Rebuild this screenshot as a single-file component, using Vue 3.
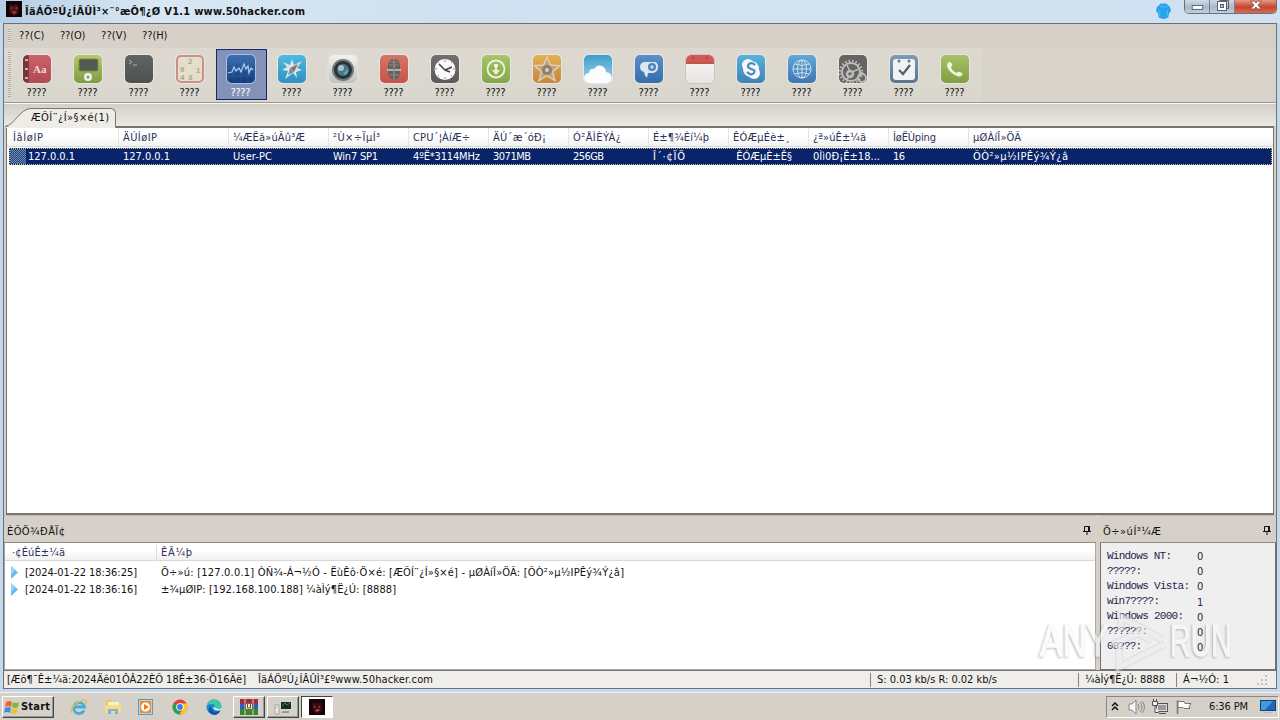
<template>
  <div class="desktop">
    <!-- title bar -->
    <header class="titlebar">
      <svg class="app-icon" viewBox="0 0 16 16">
        <rect width="16" height="16" fill="#150306" />
        <path d="M4 3l3 2 3-2 3 4-2 6-3 2-4-3-1-5z" fill="#4b1219" />
        <path d="M5 6l2 1-2 1zM11 6l-2 1 2 1zM6 11l2-1 3 1-3 2z" fill="#a03b3e" />
      </svg>
      <span v-fit="280" class="title">ÎäÁÖºÚ¿ÍÂÛÌ³×¨°æÔ¶¿Ø V1.1 www.50hacker.com</span>
      <svg class="shirt" viewBox="0 0 18 18">
        <path d="M6 1h6l4 4 1 4-2 2-1 5q-5 3-10 0l-1-5-2-2 1-4z" fill="#25a3ee" />
        <path d="M5 4q4 2 8 0M5 8v7M13 8v7" fill="none" stroke="#55bff8" />
      </svg>
      <div class="win-buttons">
        <span class="wb min"><svg viewBox="0 0 25 14"><rect x="7.500" y="5.500" width="11" height="4" fill="#fff" stroke="#596170" /></svg></span>
        <span class="wb max"><svg viewBox="0 0 24 14"><path d="M9.500 .5h9v8h-2" fill="none" stroke="#596170" /><rect x="7.500" y="1.500" width="9" height="9" fill="#fff" stroke="#596170" /><rect x="10.500" y="4.500" width="3" height="3" fill="#b8c4d2" stroke="#596170" /></svg></span>
        <span class="wb close"><svg viewBox="0 0 42 14"><path d="M16 1h4l1.500 2L23 1h4l-3.500 4L27 9h-4l-1.500-2L20 9h-4l3.500-4z" fill="#fff" stroke="#754a4b" stroke-width=".8" /></svg></span>
      </div>
    </header>

    <main class="window">
      <nav class="menu">
        <i class="grip"></i>
        <span v-for="m in menus" :key="m" v-fit="25.500" class="menu-item">{{ m }}</span>
      </nav>

      <section class="toolbar">
        <div class="tools">
          <i class="grip"></i>
          <div v-for="t in tools" :key="t.name" class="tool" :class="{ active: t.name === 'monitor' }">
            <div class="ticon" :class="t.name">
              <svg viewBox="0 0 28 28" v-html="t.art"></svg>
            </div>
            <span v-fit="20" class="tlabel">????</span>
          </div>
        </div>
      </section>

      <section class="tabs">
        <svg class="tab-shape" viewBox="0 0 112 21">
          <path d="M0 20.500C10 19 14 2 26 1.500h80q4 0 4.500 4v16H0z" fill="#eeece6" />
          <path d="M0 19.500C10 18 14 2 26 1.500h80q4 0 4.500 4v15" fill="none" stroke="#77756e" />
        </svg>
        <span v-fit="78" class="tab-text">ÆÕÍ¨¿Í»§×é(1)</span>
      </section>

      <!-- host list -->
      <section class="hosts">
        <div class="row head">
          <div v-for="c in columns" :key="c.head" class="cell" :style="{ width: c.w + 'px' }">
            <span v-fit="c.hw">{{ c.head }}</span>
          </div>
        </div>
        <div class="row selected">
          <i class="thumb"></i>
          <div v-for="c in columns" :key="c.head" class="cell" :style="{ width: c.w + 'px' }">
            <span v-fit="c.vw" :class="{ shift: c.shift }">{{ c.value }}</span>
          </div>
        </div>
      </section>

      <!-- bottom panels -->
      <section class="bottom">
        <div class="log">
          <div class="caption">
            <span v-fit="58">ÈÕÖ¾ÐÅÏ¢</span>
            <svg class="pin" viewBox="0 0 8 9"><path d="M1.500 5V.5h5V5M0 5.500h8M4 6v3M5.500 1v4" fill="none" stroke="#111" /></svg>
          </div>
          <div class="log-list">
            <div class="log-head">
              <div class="lh-time"><span v-fit="53">·¢ÉúÊ±¼ä</span></div>
              <span v-fit="31">ÊÂ¼þ</span>
            </div>
            <div v-for="l in logs" :key="l.time" class="log-row">
              <svg class="arrow" viewBox="0 0 7 13"><path d="M0 0l7 6.500L0 13z" fill="#6bb8ea" /><path d="M0 0l4 4-4 5z" fill="#9ad5f5" /></svg>
              <span v-fit="112" class="time">{{ l.time }}</span>
              <span v-fit="l.w">{{ l.text }}</span>
            </div>
          </div>
        </div>
        <div class="stats">
          <div class="caption">
            <span v-fit="58">Ö÷»úÍ³¼Æ</span>
            <svg class="pin" viewBox="0 0 8 9"><path d="M1.500 5V.5h5V5M0 5.500h8M4 6v3M5.500 1v4" fill="none" stroke="#111" /></svg>
          </div>
          <div class="stat-box">
            <div class="names"><div v-for="s in stats" :key="s.name"><span v-fit="s.name.length * 6 - 1">{{ s.name }}</span></div></div>
            <div class="nums"><div v-for="s in stats" :key="s.name">{{ s.n }}</div></div>
          </div>
        </div>
      </section>

      <footer class="status">
        <span v-fit="239" class="s-start">[Æô¶¯Ê±¼ä:2024Äê01ÔÂ22ÈÕ 18Ê±36·Ö16Ãë]</span>
        <span v-fit="175" class="s-site">ÎäÁÖºÚ¿ÍÂÛÌ³£ºwww.50hacker.com</span>
        <div class="s-cell speed"><span v-fit="120">S: 0.03 kb/s R: 0.02 kb/s</span></div>
        <div class="s-cell port"><span v-fit="80">¼àÌý¶Ë¿Ú: 8888</span></div>
        <div class="s-cell conn"><span v-fit="46">Á¬½Ó: 1</span></div>
        <svg class="resize" viewBox="0 0 12 12"><path d="M9 1h2v2H9zM9 5h2v2H9zM5 5h2v2H5zM9 9h2v2H9zM5 9h2v2H5zM1 9h2v2H1z" fill="#c3c1bb" /></svg>
      </footer>
    </main>

    <!-- watermark over the stats panel -->
    <svg class="watermark" viewBox="0 0 200 66">
      <text x="3" y="47" textLength="69" lengthAdjust="spacingAndGlyphs">ANY</text>
      <text x="133" y="47" textLength="62" lengthAdjust="spacingAndGlyphs">RUN</text>
      <path d="M84 21V8L126 31M75 36l26-12 14 8M82 33v25l46-23" fill="none" stroke="#bdbdbd" stroke-opacity=".3" stroke-width="8" />
      <path d="M84 21V8L126 31M75 36l26-12 14 8M82 33v25l46-23" fill="none" stroke="#fafafa" stroke-opacity=".5" stroke-width="5.500" />
    </svg>

    <!-- taskbar -->
    <div class="taskbar">
      <div class="start">
        <svg viewBox="0 0 16 16">
          <path d="M2 3q3-2 6 0L7 8q-3-2-6 0z" fill="#ee6333" /><path d="M9 3q3 2 6 0l-1 5q-3 2-6 0z" fill="#79b842" />
          <path d="M1 9q3-2 6 0l-1 5q-3-2-6 0z" fill="#3d91dc" /><path d="M8 9q3 2 6 0l-1 5q-3 2-6 0z" fill="#f4c133" />
        </svg>
        <span v-fit="29">Start</span>
      </div>
      <div class="quick">
        <svg viewBox="0 0 18 18"><path d="M14 12.500A5.500 5.500 0 1 1 14.500 9H5" fill="none" stroke="#43ace3" stroke-width="2.800" /><path d="M2 15Q-1 11 7 5q7-5 9-2 1 1-.5 3" fill="none" stroke="#e8bd45" stroke-width="1.400" /></svg>
        <svg viewBox="0 0 18 18"><path d="M2 2h5l1 2h7v10H2z" fill="#e9c865" /><path d="M4 4h11v4H4z" fill="#fff1b6" /><path d="M1 7h16v8H1z" fill="#f5dc86" /><path d="M4 16v-5h10v5h-3v-3H7v3z" fill="#70b8e1" /></svg>
        <svg viewBox="0 0 18 18"><rect x="1.500" y="1.500" width="14" height="15" fill="#a9d9f0" stroke="#6697b4" /><rect x="3" y="3" width="11" height="12" fill="#f28c22" /><circle cx="8.500" cy="9" r="4.500" fill="#fff" /><path d="M7 6l5 3-5 3z" fill="#ed7d16" /></svg>
        <svg viewBox="0 0 18 18"><circle cx="9" cy="9" r="7.500" fill="#e34133" /><path d="M2.500 5.300L9 9v7.500A7.500 7.500 0 0 1 2.500 5.300" fill="#27a455" /><path d="M9 5.500h6.700A7.500 7.500 0 0 1 8.500 16.500L12 11z" fill="#f8c72d" /><circle cx="9" cy="9" r="3.800" fill="#fff" /><circle cx="9" cy="9" r="2.900" fill="#347fe5" /></svg>
        <svg viewBox="0 0 18 18"><circle cx="9" cy="9" r="7.500" fill="#168bcf" /><path d="M2 6q6-8 12-2 4 4 1 7-4 2-6 0 2-5-2-5-4 0-5 2z" fill="#40c6a8" /><path d="M6 8q0 8 9 5-3 6-9 3-5-4 0-8" fill="#1352a5" /><path d="M8 9q1 5 8 3l1-2q-4 2-6 0" fill="#dce9ec" /></svg>
      </div>
      <div class="tasks">
        <div class="task"><svg viewBox="0 0 18 18"><path d="M0 1h18v5H0z" fill="#a6274c" /><path d="M0 6h18v5H0z" fill="#285fc0" /><path d="M0 11h18v6H0z" fill="#30883c" /><path d="M5 1v16M13 1v16" stroke="#e6b847" stroke-width="1.200" /><rect x="5.500" y="5.500" width="7" height="6" fill="#eee5ca" stroke="#7c6546" /><path d="M7.500 6v4h3V6" fill="none" stroke="#555" /></svg></div>
        <div class="task"><svg viewBox="0 0 18 18"><rect x="1" y="7" width="4" height="9" fill="#e9e9e9" stroke="#888" stroke-width=".6" /><path d="M2 9h1v1H2z" fill="#3c3" /><rect x="6.500" y="3.500" width="11" height="8" fill="#16301d" stroke="#d5d5d5" /><path d="M8 8l3-3 2 2 3-2" stroke="#3c8649" fill="none" /><path d="M9 13h6v2H7z" fill="#999" /></svg></div>
        <div class="task pressed"><svg viewBox="0 0 18 18"><rect x="1" y="1" width="16" height="16" fill="#170408" /><path d="M5 4l4 2 4-2 2 5-2 5-4 2-4-3-1-5z" fill="#3c0c13" /><path d="M6 8l2 1-2 1zM12 8l-2 1 2 1zM7 12l3-1 2 1-3 2z" fill="#b04a4d" /></svg></div>
      </div>
      <div class="tray">
        <svg class="chev" viewBox="0 0 8 11"><path d="M1 5l3-3 3 3M1 9l3-3 3 3" fill="none" stroke="#111" stroke-width="1.500" /></svg>
        <svg class="tr" viewBox="0 0 18 16"><path d="M2 5h3l4-4v14l-4-4H2z" fill="#f5f5f5" stroke="#888" /><path d="M11 5q2 3 0 6M13 3q4 5 0 10M15 2q5 6 0 12" fill="none" stroke="#858585" /></svg>
        <svg class="tr" viewBox="0 0 18 16"><rect x="5.500" y="4.500" width="11" height="8" fill="#ddd" stroke="#555" /><path d="M7 6h8v5H7z" fill="#999" /><path d="M1.500 2.500h5v4h-5zM4 7v6.500h4M2.500 0v3M5.500 0v3" fill="#eee" stroke="#555" /><path d="M8 14.500h7" stroke="#555" /></svg>
        <svg class="tr" viewBox="0 0 18 16"><path d="M2.500 15V1.500" stroke="#777" stroke-width="1.500" /><path d="M3 2.500h6l1 2h6l-2 3 1 2h-6l-1-1H3z" fill="#fff" stroke="#777" /></svg>
        <span v-fit="39" class="time-now">6:36 PM</span>
        <svg class="show" viewBox="0 0 16 15"><rect x=".5" y="1.500" width="15" height="10" fill="#1d67bd" stroke="#123e79" /><path d="M1 2h12L5 11H1z" fill="#4499de" /><path d="M4 13.500h8" stroke="#bbb" /></svg>
      </div>
    </div>
  </div>
</template>

<script setup>
// 按目标宽度微调字距
const vFit = {
  mounted(el, { value }) {
    const range = document.createRange();
    range.selectNodeContents(el);
    const w = range.getBoundingClientRect().width;
    el.style.letterSpacing = (value - w) / Math.max(1, el.textContent.length - 1) + "px";
  }
};

const menus = ["??(C)", "??(O)", "??(V)", "??(H)"];

const tools = [
  { name: "book", art: '<rect width="6" height="28" rx="3" fill="#75343a"/><path d="M5 0v28" stroke="#953c43"/><path d="M2 5h3M2 14h3M2 23h3" stroke="#c8b8b0" stroke-width="2"/><text x="10" y="18" font-family="Liberation Serif" font-weight="bold" font-size="11" fill="#f3d6d0">Aa</text>' },
  { name: "ipod", art: '<rect x="5" y="4" width="19" height="12" rx="1.500" fill="#515b50" stroke="#788b51"/><circle cx="14" cy="22" r="4" fill="#f1f3e9"/><circle cx="14" cy="22" r="1.500" fill="#829463"/>' },
  { name: "term", art: '<path d="M4 5l3 2-3 2M8 10h4" fill="none" stroke="#b1b1b1"/>' },
  { name: "numbers", art: '<g fill="#aaa594" font-family="Liberation Sans" font-weight="bold" font-size="8"><text x="12" y="9">2</text><text x="4" y="17">9</text><text x="20" y="18">1</text><text x="4" y="25">4</text><text x="12" y="25">3</text></g>' },
  { name: "monitor", art: '<path d="M0 7h28M0 14h28M0 21h28M7 0v28M14 0v28M21 0v28" stroke="#477fc0" stroke-opacity=".4" stroke-width=".6"/><path d="M1 18l4-1 2-5 2 4 3-3 2 4 3-8 2 5 2-3 1 7 2-5 2 2" fill="none" stroke="#a9cef6" stroke-width="1.200"/>' },
  { name: "compass", art: '<path d="M5 7l7 3 2-6 2 6 8-4-5 7 5 2-6 2 1 6-4-5-8 6 3-8-6-1 5-3z" fill="#d8e7ec"/><path d="M20 9l-4 8-4-4z" fill="#a06b5e"/><path d="M10 20l2-7 4 4z" fill="#75939e"/>' },
  { name: "camera", art: '<circle cx="14" cy="15" r="11" fill="#717979"/><circle cx="14" cy="15" r="9" fill="#253238"/><circle cx="14" cy="15" r="6" fill="#4d7582"/><circle cx="12" cy="13" r="3" fill="#a8c2c7"/><path d="M15 19q3-1 3-4" stroke="#61abc0" fill="none" stroke-width="2"/>' },
  { name: "mic", art: '<path d="M8 12q0-8 6-8t6 8v5q0 7-6 8-6-1-6-8z" fill="#67605d"/><path d="M10 7h8M9 10h10M9 20h10" stroke="#8f8985"/><path d="M7 15h14" stroke="#ccc" stroke-width="1.500"/><path d="M14 4v21" stroke="#8f8985" stroke-width="1.500"/>' },
  { name: "clock", art: '<circle cx="14" cy="14.500" r="10.500" fill="#fafafa"/><path d="M14 5v2M14 22v2M4 14h2M22 14h2M7 7l1 1M21 7l-1 1M7 21l1-1M21 21l-1-1" stroke="#888"/><path d="M8 9l6 6 7-3M14 15l5 2" fill="none" stroke="#444" stroke-width="1.500"/>' },
  { name: "down", art: '<circle cx="14" cy="14" r="8.500" fill="none" stroke="#f1f4de" stroke-width="1.800"/><path d="M12 9h4v3h-1v3h3l-4 5-4-5h3v-3h-1z" fill="#eef2d9"/>' },
  { name: "star", art: '<path d="M14 2l3.500 8 9 .7-7 6 2.500 9-8-5-8 5 2.500-9-7-6 9-.7z" fill="#b9a68c" stroke="#e5cda7" stroke-width="1.500"/><circle cx="14" cy="15" r="5" fill="#8b806f"/><circle cx="14" cy="15" r="2" fill="#ddd0b3"/>' },
  { name: "cloud", art: '<path d="M0 24q0-6 5-6 1-5 5-4 3-5 8-3 4 2 4 6 6 1 6 7-1 4-5 4H5q-4 0-5-4" fill="#fbfcfd"/>' },
  { name: "talk", art: '<path d="M9 7h10q4 0 4 5t-5 6h-5l-1 5q-3-3-3-6-4-1-4-5t4-5" fill="#dde5f1"/><circle cx="17" cy="12" r="4" fill="#4e80bb"/><circle cx="17" cy="12" r="1.700" fill="#cad8e9"/>' },
  { name: "calendar", art: '<path d="M0 9V5q0-5 5-5h18q5 0 5 5v4z" fill="#d15b54"/><path d="M0 8h28" stroke="#b94d47"/><circle cx="7" cy="3" r="1" fill="#9b3e3a"/><circle cx="21" cy="3" r="1" fill="#9b3e3a"/>' },
  { name: "skype", art: '<circle cx="11" cy="10" r="6" fill="#f4f8fb"/><circle cx="17" cy="18" r="6" fill="#f4f8fb"/><circle cx="14" cy="14" r="8" fill="#f4f8fb"/><path d="M18 10q-3-3-6-1-3 3 2 5 5 1 3 4-3 3-7-1" fill="none" stroke="#438cbc" stroke-width="2.200"/>' },
  { name: "globe", art: '<g fill="none" stroke="#cfe0ee"><circle cx="14" cy="14" r="9"/><ellipse cx="14" cy="14" rx="4.500" ry="9"/><path d="M14 5v18M5 14h18M7 9q7 3 14 0M7 19q7-3 14 0"/></g>' },
  { name: "gear", art: '<g fill="none" stroke="#bcbcba"><circle cx="12" cy="17" r="9" stroke-width="2"/><circle cx="12" cy="17" r="11" stroke-width="2.500" stroke-dasharray="1.500 2"/><circle cx="11" cy="19" r="3" stroke-width="2.500"/><path d="M11 17L8 10M13 17l7-3M12 20l-5 5" stroke-width="1.500"/><circle cx="23" cy="23" r="4" stroke-width="2"/></g>' },
  { name: "check", art: '<rect x="3" y="4" width="22" height="21" rx="3" fill="#f0f2f3"/><circle cx="9" cy="6" r="1.500" fill="#65788e"/><circle cx="19" cy="6" r="1.500" fill="#65788e"/><path d="M9 15l4 4 7-9" fill="none" stroke="#555d65" stroke-width="2.200"/>' },
  { name: "phone", art: '<path d="M8 7q1-1 3 2 1 2-1 3 1 4 6 6 1-2 3-1 4 2 2 3-2 3-7 0-7-4-8-9 0-3 2-4" fill="#f2f5e5"/>' }
];

const columns = [
  { head: "ÍâÍøIP", hw: 30, value: "127.0.0.1", vw: 47, w: 110, shift: true },
  { head: "ÄÚÍøIP", hw: 34, value: "127.0.0.1", vw: 47, w: 110 },
  { head: "¼ÆËã»úÃû³Æ", hw: 72, value: "User-PC", vw: 39, w: 100 },
  { head: "²Ù×÷ÏµÍ³", hw: 47, value: "Win7 SP1", vw: 45, w: 80 },
  { head: "CPU´¦ÀíÆ÷", hw: 57, value: "4ºË*3114MHz", vw: 67, w: 80 },
  { head: "ÄÚ´æ´óÐ¡", hw: 53, value: "3071MB", vw: 38, w: 80 },
  { head: "Ó²ÅÌÈÝÁ¿", hw: 48, value: "256GB", vw: 31, w: 80 },
  { head: "É±¶¾Èí¼þ", hw: 56, value: "Î´·¢ÏÖ", vw: 32, w: 80 },
  { head: "ÊÓÆµÉè±¸", hw: 57, value: " ÊÓÆµÈ±Ê§", vw: 59, w: 80 },
  { head: "¿ª»úÊ±¼ä", hw: 53, value: "0Ìì0Ð¡Ê±18...", vw: 67, w: 80 },
  { head: "ÍøËÙping", hw: 43, value: "16", vw: 12, w: 80 },
  { head: "µØÀíÎ»ÖÃ", hw: 48, value: "ÕÒ²»µ½IPÊý¾Ý¿â", vw: 95, w: 299 }
];

const logs = [
  { time: "[2024-01-22 18:36:25]", w: 463, text: "Ö÷»ú: [127.0.0.1] ÒÑ¾-Á¬½Ó - ËùÊô·Ö×é: [ÆÕÍ¨¿Í»§×é] - µØÀíÎ»ÖÃ: [ÕÒ²»µ½IPÊý¾Ý¿â]" },
  { time: "[2024-01-22 18:36:16]", w: 235, text: "±¾µØIP: [192.168.100.188] ¼àÌý¶Ë¿Ú: [8888]" }
];

const stats = [
  { name: "Windows NT:", n: 0 },
  { name: "?????:", n: 0 },
  { name: "Windows Vista:", n: 0 },
  { name: "win7????:", n: 1 },
  { name: "Windows 2000:", n: 0 },
  { name: "??????:", n: 0 },
  { name: "08???:", n: 0 }
];
</script>

<style>
body {
  overflow: hidden;
}
</style>

<style scoped>
.desktop {
  width: 1280px;
  height: 720px;
  position: relative;
  display: flex;
  flex-direction: column;
  overflow: hidden;
  background: #c5d9eb;
  font: 11px/16px "DejaVu Sans Condensed", "DejaVu Sans", sans-serif;
  color: #111;
  white-space: nowrap;
}
.desktop * {
  box-sizing: border-box;
}
svg {
  display: block;
  flex: none;
}
.titlebar {
  height: 23px;
  display: flex;
  padding-left: 6px;
  background: linear-gradient(90deg, #b4cee4, #d9e7f3 12%, #cfe0f0 35%, #d3e2f1 60%, #d0e1f1);
}
.app-icon {
  width: 16px;
  height: 16px;
  margin-top: 1px;
}
.title {
  font-weight: bold;
  margin: 4px auto 0 3px;
}
.shirt {
  width: 17px;
  height: 18px;
  margin: 2px 12px 0 0;
}
.win-buttons {
  display: flex;
  width: 93px;
  height: 14px;
  margin-right: 3px;
  border: 1px solid #66717e;
  border-top: 0;
  border-radius: 0 0 5px 5px;
  overflow: hidden;
}
.wb {
  background: linear-gradient(#d1dbe6, #a9b8c9 50%, #c5d2df);
  border-right: 1px solid #77828f;
  height: 14px;
}
.wb svg {
  width: 100%;
  height: 14px;
}
.min {
  width: 25px;
}
.max {
  width: 25px;
}
.close {
  flex: 1;
  border: 0;
  background: linear-gradient(#e69984, #c9442d 50%, #d9745d);
}

.window {
  width: 1274px;
  height: 666px;
  margin-left: 3px;
  border: 1px solid #65717f;
  background: #d6d0c8;
  display: flex;
  flex-direction: column;
}
.menu {
  height: 24px;
  display: flex;
  align-items: center;
  padding-left: 4px;
  flex: none;
}
.grip {
  width: 3px;
  align-self: stretch;
  margin: 5px 0;
  background: repeating-linear-gradient(#aaa69e 0 1px, #ece9e1 1px 2px);
}
.menu-item {
  width: 25px;
  margin-left: 16px;
}
.menu-item:first-of-type {
  margin-left: 8px;
}
.toolbar {
  height: 55px;
  flex: none;
  border-bottom: 1px solid #9a978f;
  background: #d8d4cc;
}
.tools {
  width: 978px;
  height: 54px;
  display: flex;
  padding-left: 4px;
  background: linear-gradient(#ddd8d0, #d9d7ce);
}
.tools .grip {
  margin: 4px 0 5px;
}
.tool {
  width: 51px;
  height: 51px;
  margin-top: 1px;
  padding: 6px 2px 0 0;
  display: flex;
  flex-direction: column;
  align-items: center;
}
.tools .grip + .tool {
  margin-left: 1px;
}
.tool.active {
  padding-top: 5px;
  background: #8592b8;
  border: 1px solid #17286a;
}
.ticon {
  width: 28px;
  height: 28px;
  border-radius: 5px;
  overflow: hidden;
  flex: none;
  box-shadow: 0 0 0 1px rgba(255, 255, 255, 0.35);
}
.ticon svg {
  width: 28px;
  height: 28px;
}
.tlabel {
  width: 20px;
  margin-top: 2px;
}
.active .tlabel {
  color: #fff;
}
.book { background: linear-gradient(#c9626a, #b04a53); }
.ipod { background: linear-gradient(#b8ca68, #7d9e42); }
.term { background: linear-gradient(#606464, #4e5050); }
.numbers { background: #e5dfc9; border: 2px solid #c8918a; }
.numbers svg { margin: -2px; }
.monitor { background: linear-gradient(#3d6eae, #123c7a); box-shadow: 0 0 0 1px #a2c2ed; }
.compass { background: linear-gradient(#4fbadf, #3190c1); }
.camera { background: linear-gradient(#f3f2ed, #c2c1bd); box-shadow: 0 0 0 2px #dedddd; }
.mic { background: linear-gradient(#d47469, #c8534b); }
.clock { background: linear-gradient(#746e6f, #5e595b); }
.down { background: linear-gradient(#a9c46a, #84a748); }
.star { background: linear-gradient(#e3b051, #c98342); }
.cloud { background: linear-gradient(#3c9dcc, #a8d7ed); }
.talk { background: linear-gradient(#5790ca, #356dac); }
.calendar { background: linear-gradient(#f6f4f2, #e9e5e3); box-shadow: 0 0 0 1px #cfc3bf; }
.skype { background: linear-gradient(#55b3d9, #4082b8); }
.globe { background: linear-gradient(#63a8d5, #3c77b4); }
.gear { background: #656463; }
.check { background: linear-gradient(#7e9ab5, #5d758e); }
.phone { background: linear-gradient(#a7c268, #809f43); }

.tabs {
  height: 23px;
  position: relative;
  border-top: 1px solid #f9f8f5;
  background: linear-gradient(#d2cfc8, #ebe9e3);
  flex: none;
}
.tab-shape {
  position: absolute;
  left: 1px;
  top: 3px;
  width: 112px;
  height: 21px;
}
.tab-text {
  position: absolute;
  left: 27px;
  top: 6px;
}

.hosts {
  height: 389px;
  flex: none;
  margin: 0 2px 0 2px;
  border: 1px solid #77756f;
  border-width: 2px 1px 2px 1px;
  background: #fff;
}
.row {
  display: flex;
  height: 19px;
  position: relative;
}
.head {
  color: #2a3156;
  background: linear-gradient(#fff 45%, #f1f1f2);
  border-bottom: 1px solid #d8d8d8;
  padding-left: 2px;
}
.cell {
  flex: none;
  padding: 2px 0 0 4px;
  border-right: 1px solid transparent;
}
.head .cell {
  border-color: #e3e3e5;
}
.row .cell:last-child {
  border: 0;
}
.selected {
  height: 17px;
  margin: 1px 1px 0 2px;
  color: #fff;
  background: #0a246a;
  outline: 1px dotted #c8c188;
  outline-offset: -1px;
}
.selected .cell {
  padding-top: 1px;
  white-space: pre;
}
.thumb {
  position: absolute;
  left: 1px;
  top: 1px;
  width: 16px;
  height: 15px;
  background: repeating-conic-gradient(#718bae 0 25%, #23457f 0 50%) 0 0 / 2px 2px;
}
.shift {
  margin-left: 15px;
}

.bottom {
  display: flex;
  height: 155px;
  flex: none;
}
.log {
  width: 1092px;
}
.caption {
  height: 28px;
  display: flex;
  justify-content: space-between;
  align-items: center;
  padding: 6px 5px 0 3px;
  border-bottom: 1px solid #8c8a86;
  border-top: 1px solid #bfbcb5;
}
.pin {
  width: 8px;
  height: 9px;
  margin-top: -3px;
}
.log-list {
  height: 127px;
  background: #fff;
  border: 1px solid #aaa8a3;
  border-top: 0;
}
.log-head {
  height: 18px;
  display: flex;
  align-items: center;
  color: #2a3156;
  background: linear-gradient(#fff 45%, #f0f0f1);
  border-bottom: 1px solid #d8d8d8;
  padding: 2px 0 0 7px;
}
.lh-time {
  width: 145px;
  margin-right: 4px;
  border-right: 1px solid #ddd;
}
.log-row {
  display: flex;
  height: 17px;
  align-items: center;
  padding-left: 6px;
}
.log-head + .log-row {
  margin-top: 3px;
}
.arrow {
  width: 7px;
  height: 13px;
}
.time {
  width: 143px;
  padding-left: 7px;
}
.stats {
  flex: 1;
  padding-left: 4px;
}
.stat-box {
  height: 127px;
  display: flex;
  border: 1px solid #73716d;
  border-top: 0;
  background: #f0efef;
  padding-left: 6px;
}
.names {
  width: 90px;
  padding-top: 6px;
  font: 11px/15px "Liberation Mono", monospace;
  color: #25254c;
}
.nums {
  padding-top: 6px;
  line-height: 15.200px;
  color: #25254c;
}
.status {
  flex: 1;
  display: flex;
  align-items: center;
  padding-left: 3px;
  background: #f0eeeb;
  border-top: 1px solid #777570;
}
.s-start {
  width: 251px;
}
.s-site {
  width: 612px;
}
.s-cell {
  height: 14px;
  line-height: 14px;
  padding-left: 6px;
  border-left: 1px solid #85837f;
}
.speed {
  width: 208px;
}
.port {
  width: 98px;
}
.conn {
  width: 80px;
}
.resize {
  width: 12px;
  height: 12px;
}
.watermark {
  position: absolute;
  left: 1037px;
  top: 609px;
  width: 200px;
  height: 66px;
}
.watermark text {
  font: 45px "Liberation Sans", sans-serif;
  fill: #fafafa;
  stroke: #fafafa;
  stroke-width: 1.5px;
  opacity: 0.6;
  filter: drop-shadow(-1px 1px 1px rgba(100, 100, 100, 0.7));
}

.taskbar {
  height: 28px;
  margin-top: auto;
  display: flex;
  align-items: center;
  background: #d5d0c8;
  border-top: 1px solid #f2f0ec;
}
.start {
  width: 52px;
  height: 22px;
  margin-left: 2px;
  display: flex;
  align-items: center;
  gap: 1px;
  padding-left: 1px;
  font-weight: bold;
  border: 1px solid #fff;
  border-right-color: #444;
  border-bottom-color: #444;
  box-shadow: inset -1px -1px #999;
}
.start svg {
  width: 16px;
  height: 16px;
}
.quick {
  display: flex;
  gap: 15.700px;
  margin-left: 16px;
}
.quick svg,
.task svg {
  width: 18px;
  height: 18px;
}
.tasks {
  display: flex;
  gap: 2px;
  margin-left: 10px;
}
.task {
  width: 32px;
  height: 22px;
  display: flex;
  align-items: center;
  justify-content: center;
  border: 1px solid #fff;
  border-right-color: #444;
  border-bottom-color: #444;
  box-shadow: inset -1px -1px #999;
}
.task.pressed {
  background: #fff;
  border-color: #444 #fff #fff #444;
  box-shadow: none;
}
.tray {
  width: 173px;
  height: 22px;
  margin-left: auto;
  margin-right: 1px;
  display: flex;
  align-items: center;
  padding-left: 4px;
  border: 1px solid #8a8882;
  border-right-color: #fff;
  border-bottom-color: #fff;
}
.chev {
  width: 8px;
  height: 11px;
  margin-right: 8px;
}
.tr {
  width: 18px;
  height: 16px;
  margin-right: 6px;
}
.time-now {
  width: 51px;
  margin: 1px 0 0 10px;
}
.show {
  width: 16px;
  height: 15px;
}
</style>
